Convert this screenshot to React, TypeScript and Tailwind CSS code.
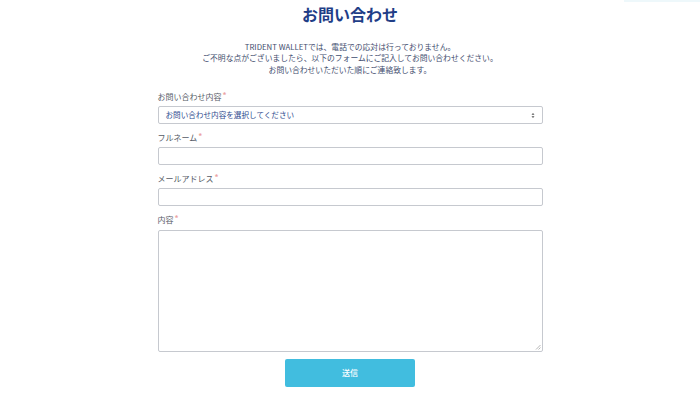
import React from "react";

const font = { fontFamily: '"Noto Sans CJK JP", "Noto Sans", sans-serif' };

function Label({ children }: { children: React.ReactNode }) {
  return (
    <div className="text-[8px] leading-[12px] text-[#555b66] h-[12px] overflow-visible whitespace-nowrap">
      {children}
      <span className="text-[#eba3a3] text-[8px] font-bold leading-[0px] relative top-[-2px] ml-[1px]">*</span>
    </div>
  );
}

export default function App() {
  return (
    <div className="w-[700px] h-[400px] bg-white relative overflow-hidden" style={font}>
      <div className="absolute right-0 top-0 w-[76px] h-[2px] bg-[#eef8fb]" />
      <div className="flex flex-col items-center">
        <h1 className="mt-[3px] h-[22px] text-[16px] leading-[22px] font-bold text-[#1f3e87]">お問い合わせ</h1>
        <div className="mt-[15px] text-center text-[7.8px] leading-[12px] text-[#3f4d6e]">
          <p className="h-[12px] pt-[1px]">TRIDENT WALLETでは、電話での応対は行っておりません。</p>
          <p className="h-[12px]">ご不明な点がございましたら、以下のフォームにご記入してお問い合わせください。</p>
          <p className="h-[12px]">お問い合わせいただいた順にご連絡致します。</p>
        </div>
        <div className="w-[385px] mt-[15px] flex flex-col">
          <Label>お問い合わせ内容</Label>
          <div className="mt-[3px] h-[18px] border border-[#c6c9cf] rounded-[2px] flex items-center justify-between px-[7px]">
            <span className="text-[7.6px] leading-[10px] text-[#2e4b8e]">お問い合わせ内容を選択してください</span>
            <svg width="4" height="7" viewBox="0 0 4 7">
              <path d="M0.5 2.8 L2 1 L3.5 2.8Z M0.5 4.2 L2 6 L3.5 4.2Z" fill="#555" />
            </svg>
          </div>
          <div className="mt-[8px]"><Label>フルネーム</Label></div>
          <div className="mt-[3px] h-[18px] border border-[#c6c9cf] rounded-[2px]" />
          <div className="mt-[8px]"><Label>メールアドレス</Label></div>
          <div className="mt-[3px] h-[18px] border border-[#c6c9cf] rounded-[2px]" />
          <div className="mt-[8px]"><Label>内容</Label></div>
          <div className="mt-[4px] h-[122px] border border-[#c6c9cf] rounded-[2px] relative">
            <svg className="absolute right-[1px] bottom-[1px]" width="6" height="6" viewBox="0 0 6 6">
              <path d="M5.5 1 L1 5.5 M5.5 3.5 L3.5 5.5" stroke="#999" strokeWidth="0.7" />
            </svg>
          </div>
          <div className="flex justify-center mt-[7px]">
            <button className="w-[130px] h-[28px] bg-[#41bddf] rounded-[2px] text-white text-[8px] leading-[10px] font-medium">送信</button>
          </div>
        </div>
      </div>
    </div>
  );
}
